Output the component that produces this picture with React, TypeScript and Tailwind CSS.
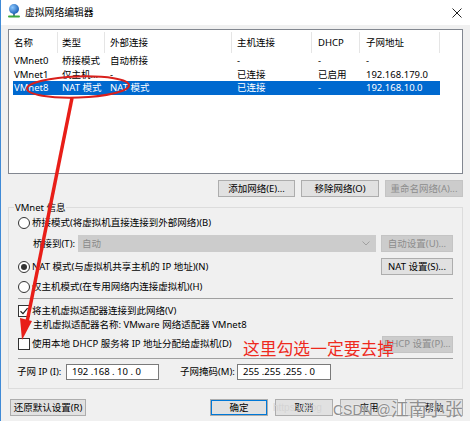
import React from 'react';
import clsx from 'clsx';

const FONT = "font-['Noto_Sans','Noto_Sans_CJK_SC',sans-serif]";

function Btn({ children, className, disabled, primary }: { children: React.ReactNode; className?: string; disabled?: boolean; primary?: boolean }) {
  return (
    <div
      className={clsx(
        'flex items-center justify-center h-[17px] border whitespace-nowrap',
        disabled ? 'bg-[#cccccc] border-[#c4c4c4] text-[#8d8d8d]' : 'bg-[#e1e1e1] border-[#adadad] text-black',
        primary && 'border-[#0078d7] shadow-[inset_0_0_0_1px_#0078d7]',
        className
      )}
    >
      {children}
    </div>
  );
}

function Radio({ checked }: { checked?: boolean }) {
  return (
    <div className="w-[12px] h-[12px] rounded-full border border-[#333] bg-white flex items-center justify-center shrink-0">
      {checked && <div className="w-[6px] h-[6px] rounded-full bg-[#333]" />}
    </div>
  );
}

function Check({ checked }: { checked?: boolean }) {
  return (
    <div className="w-[12px] h-[12px] border border-[#333] bg-white flex items-center justify-center shrink-0">
      {checked && (
        <svg width="10" height="10" viewBox="0 0 10 10">
          <path d="M1.5 5.2 L4 7.6 L8.6 2.2" fill="none" stroke="#222" strokeWidth="1.2" />
        </svg>
      )}
    </div>
  );
}

const cols = [
  { w: 'w-[49px]', rw: 'w-[45px]', hp: 'pl-[5px]', rp: 'pl-[1px]' },
  { w: 'w-[47px]', rw: 'w-[47px]', hp: 'pl-[4px]', rp: 'pl-[4px]' },
  { w: 'w-[127px]', rw: 'w-[127px]', hp: 'pl-[5px]', rp: 'pl-[5px]' },
  { w: 'w-[80px]', rw: 'w-[80px]', hp: 'pl-[5px]', rp: 'pl-[5px]' },
  { w: 'w-[48px]', rw: 'w-[48px]', hp: 'pl-[6px]', rp: 'pl-[6px]' },
  { w: 'w-[80px]', rw: 'w-[80px]', hp: 'pl-[6px]', rp: 'pl-[6px]' },
];

const headers = ['名称', '类型', '外部连接', '主机连接', 'DHCP', '子网地址'];
const rows = [
  ['VMnet0', '桥接模式', '自动桥接', '-', '-', '-'],
  ['VMnet1', '仅主机...', '-', '已连接', '已启用', '192.168.179.0'],
  ['VMnet8', 'NAT 模式', 'NAT 模式', '已连接', '-', '192.168.10.0'],
];

export default function App() {
  return (
    <div className={clsx('relative w-[470px] h-[421px] bg-[#f0f0f0] border-l border-[#3f8ad6] text-[9.5px] leading-none text-black overflow-hidden', FONT)}>
      {/* title bar */}
      <div className="h-[25px] bg-white flex items-center pl-[6px] pr-[7px]">
        <svg width="14" height="16" viewBox="0 0 14 16" className="mt-[-4px]">
          <defs>
            <radialGradient id="g" cx="0.35" cy="0.35" r="0.7">
              <stop offset="0" stopColor="#8cc8ff" />
              <stop offset="1" stopColor="#1a5fb4" />
            </radialGradient>
          </defs>
          <rect x="6" y="9" width="2" height="4" fill="#5a7a9a" />
          <rect x="1" y="12.5" width="12" height="2" rx="1" fill="#3ca83c" />
          <circle cx="7" cy="6" r="5" fill="url(#g)" />
        </svg>
        <span className="ml-[4px] text-[9.8px]">虚拟网络编辑器</span>
        <svg width="10" height="10" viewBox="0 0 10 10" className="ml-auto mr-[1px]">
          <path d="M0.5 0.5 L9.5 9.5 M9.5 0.5 L0.5 9.5" stroke="#222" strokeWidth="1" />
        </svg>
      </div>

      <div className="pt-[4px] px-[7px]">
        {/* list view */}
        <div className="h-[145px] border border-[#828790] bg-white">
          <div className="flex h-[23px] items-center pt-[2px]">
            {headers.map((h, i) => (
              <div key={h} className={clsx(cols[i].w, cols[i].hp, 'h-[21px] flex items-center border-r border-[#e5e5e5]')}>
                {h}
              </div>
            ))}
          </div>
          <div className="mt-[1px] ml-[4px]">
            {rows.map((r, ri) => (
              <div key={ri} className={clsx('flex h-[13.5px] items-center w-[427px]', ri === 2 && 'bg-[#0069cf] text-white')}>
                {r.map((c, ci) => (
                  <div key={ci} className={clsx(cols[ci].rw, cols[ci].rp, 'whitespace-nowrap')}>
                    {c}
                  </div>
                ))}
              </div>
            ))}
          </div>
        </div>

        {/* list buttons */}
        <div className="flex justify-end gap-[6px] mt-[6px]">
          <Btn className="w-[77px]">添加网络(E)...</Btn>
          <Btn className="w-[78px]">移除网络(O)</Btn>
          <Btn className="w-[78px]" disabled>重命名网络(A)...</Btn>
        </div>

        {/* VMnet info group */}
        <fieldset className="mt-[5px] border border-[#dcdcdc] pl-[9px] pr-[9px] pb-[8px]">
          <legend className="-ml-[4px] px-[1px] h-[11px] leading-[11px]">VMnet 信息</legend>

          <div className="flex items-center h-[14px] mt-[3px] gap-[2px]">
            <Radio />
            <span>桥接模式(将虚拟机直接连接到外部网络)(B)</span>
          </div>

          <div className="flex items-center h-[17px] mt-[5px]">
            <span className="ml-[15px] w-[45px]">桥接到(T):</span>
            <div className="w-[298px] h-[17px] bg-[#cccccc] flex items-center pl-[4px] text-[#8a8a8a]">
              自动
              <svg width="8" height="5" viewBox="0 0 8 5" className="ml-auto mr-[6px]">
                <path d="M0.5 0.5 L4 4 L7.5 0.5" fill="none" stroke="#a0a0a0" />
              </svg>
            </div>
            <Btn className="w-[72px] ml-[5px]" disabled>自动设置(U)...</Btn>
          </div>

          <div className="flex items-center h-[17px] mt-[6px]">
            <Radio checked />
            <span className="ml-[2px]">NAT 模式(与虚拟机共享主机的 IP 地址)(N)</span>
            <Btn className="w-[72px] ml-auto">NAT 设置(S)...</Btn>
          </div>

          <div className="flex items-center h-[14px] mt-[5px] gap-[2px]">
            <Radio />
            <span>仅主机模式(在专用网络内连接虚拟机)(H)</span>
          </div>

          <div className="mt-[4px] border-t border-[#a0a0a0]" />

          <div className="flex items-center h-[14px] mt-[5px] gap-[2px]">
            <Check checked />
            <span>将主机虚拟适配器连接到此网络(V)</span>
          </div>
          <div className="flex items-center h-[14px] pl-[15px]">
            主机虚拟适配器名称: VMware 网络适配器 VMnet8
          </div>

          <div className="flex items-center h-[16px] mt-[4px]">
            <Check />
            <span className="ml-[2px]">使用本地 DHCP 服务将 IP 地址分配给虚拟机(D)</span>
            <Btn className="w-[71px] ml-auto h-[16px]" disabled>DHCP 设置(P)...</Btn>
          </div>

          <div className="mt-[6px] border-t border-[#a0a0a0]" />

          <div className="flex items-center h-[16px] mt-[5px] -ml-[1px]">
            <span className="w-[49px]">子网 IP (I):</span>
            <div className="w-[93px] h-[16px] border border-[#7a7a7a] bg-white flex items-center pl-[5px] whitespace-pre">192 .168 . 10 . 0</div>
            <span className="ml-[21px] w-[57px]">子网掩码(M):</span>
            <div className="w-[94px] h-[16px] border border-[#7a7a7a] bg-white flex items-center pl-[5px] whitespace-pre">255 .255 .255 . 0</div>
          </div>
        </fieldset>

        {/* bottom buttons */}
        <div className="flex items-center mt-[10px]">
          <Btn className="w-[76px] ml-[2px]">还原默认设置(R)</Btn>
          <div className="ml-auto flex gap-[7px]">
            <Btn className="w-[58px]" primary>确定</Btn>
            <Btn className="w-[58px]">取消</Btn>
            <Btn className="w-[58px]">应用</Btn>
            <Btn className="w-[58px]">帮助</Btn>
          </div>
        </div>
      </div>

      {/* annotation overlay */}
      <svg className="absolute left-0 top-0 pointer-events-none" width="470" height="421" viewBox="0 0 470 421">
        <ellipse cx="77" cy="87" rx="51" ry="10.5" fill="none" stroke="#d9201c" strokeWidth="2" transform="rotate(-2 77 87)" />
        <line x1="71" y1="98" x2="26" y2="322" stroke="#e81e18" strokeWidth="3.5" />
        <polygon points="21,340 19,318 31,321" fill="#e81e18" />
      </svg>
      <div className="absolute left-[242px] top-[340px] text-[16.8px] leading-none text-[#ee2a1e] font-['Noto_Sans_CJK_SC',sans-serif] whitespace-nowrap">
        这里勾选一定要去掉
      </div>

      {/* watermark */}
      <div className="absolute left-[272px] top-[403px] text-[10px] text-[#d4d4d4] font-['Liberation_Sans',sans-serif]">https://blog</div>
      <div className="absolute left-[332px] top-[399px] flex items-end text-[#8f8f8f] whitespace-nowrap [text-shadow:0_0_2px_#fff]">
        <span className="text-[14px] font-['Liberation_Sans',sans-serif]">CSDN @</span>
        <span className="text-[18px] leading-[18px] font-['Noto_Sans_CJK_SC',sans-serif]">江南小张</span>
      </div>
    </div>
  );
}
